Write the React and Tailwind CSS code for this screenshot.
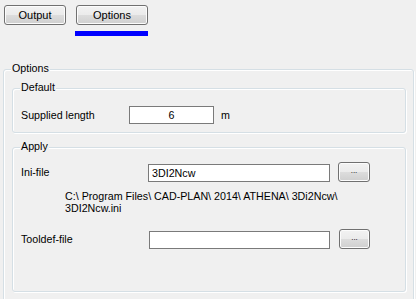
import React from "react";

const btn =
  "flex items-center justify-center rounded-[3px] border border-[#707070] bg-[linear-gradient(to_bottom,#f2f2f2_0%,#ebebeb_50%,#dddddd_50%,#cfcfcf_100%)] shadow-[inset_0_0_0_1px_#fcfcfc] text-black";

const input = "h-[18px] border border-[#7a7a7a] bg-white px-[3px] flex items-center";

function Group({ label, className, labelLeft, children }) {
  return (
    <div
      className={
        "relative rounded-[3px] border border-[#d5dfe5] shadow-[inset_1px_1px_0_#ffffff,1px_1px_0_#ffffff] " +
        className
      }
    >
      <span
        className={
          "absolute top-[-8px] bg-[#f0f0f0] px-[1px] leading-[13px] " + labelLeft
        }
      >
        {label}
      </span>
      {children}
    </div>
  );
}

export default function App() {
  return (
    <div
      className="w-[416px] h-[299px] overflow-hidden bg-[#f0f0f0] text-[10.7px] text-black"
      style={{ fontFamily: '"Liberation Sans", Arial, sans-serif' }}
    >
      <div className="flex pt-[5px] pl-[4px] gap-[10px]">
        <div className={btn + " w-[62px] h-[20px] text-[11px]"}>Output</div>
        <div className={btn + " w-[72px] h-[20px] text-[11px]"}>Options</div>
      </div>
      <div className="ml-[75px] mt-[6px] w-[73px] h-[5px] bg-[#0000ff]" />

      <Group
        label="Options"
        labelLeft="left-[7px]"
        className="ml-[3px] mt-[33px] w-[411px] h-[250px] px-[8px] pt-[18px]"
      >
        <Group
          label="Default"
          labelLeft="left-[7px]"
          className="w-[394px] h-[45px] pl-[8px] pt-[17px]"
        >
          <div className="flex items-center h-[18px]">
            <span className="w-[108px]">Supplied length</span>
            <div className={input + " w-[85px] justify-center"}>6</div>
            <span className="ml-[7px]">m</span>
          </div>
        </Group>

        <Group
          label="Apply"
          labelLeft="left-[7px]"
          className="mt-[14px] w-[394px] h-[145px] pl-[8px] pt-[14px]"
        >
          <div className="flex items-end h-[20px]">
            <span className="w-[127px] self-center">Ini-file</span>
            <div className={input + " w-[182px]"}>3DI2Ncw</div>
            <div className={btn + " ml-[8px] w-[32px] h-[20px] text-[8px] leading-none pb-[2px]"}>...</div>
          </div>
          <div className="mt-[8px] ml-[44px] leading-[12px]">
            <div>C:\ Program Files\ CAD-PLAN\ 2014\ ATHENA\ 3Di2Ncw\</div>
            <div>3DI2Ncw.ini</div>
          </div>
          <div className="mt-[15px] flex items-end h-[20px]">
            <span className="w-[128px] self-center">Tooldef-file</span>
            <div className={input + " w-[181px]"}></div>
            <div className={btn + " ml-[9px] w-[31px] h-[20px] text-[8px] leading-none pb-[2px]"}>...</div>
          </div>
        </Group>
      </Group>
    </div>
  );
}
